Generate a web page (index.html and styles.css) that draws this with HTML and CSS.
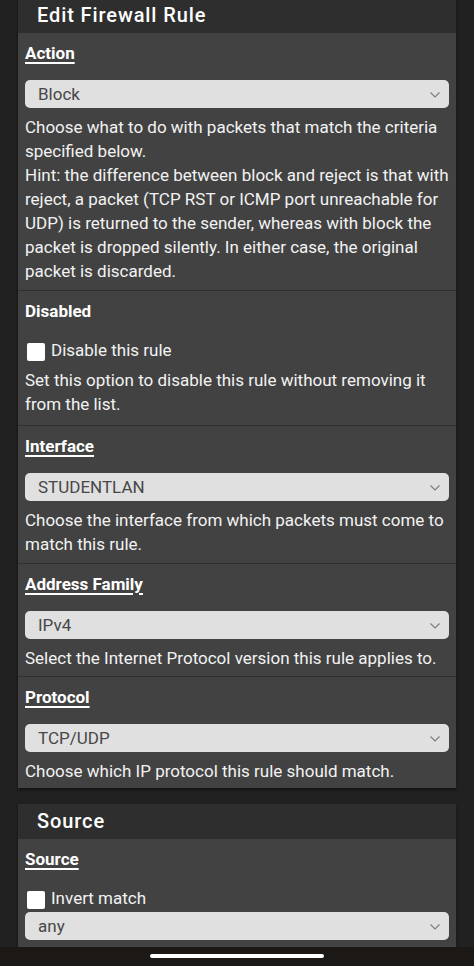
FILE: index.html
```html
<!DOCTYPE html>
<html lang="en">
<head>
<meta charset="utf-8">
<title>Edit Firewall Rule</title>
<link rel="stylesheet" href="styles.css">
</head>
<body>
<div class="page">
  <section class="panel panel-first">
    <h2 class="panel-heading">Edit Firewall Rule</h2>
    <div class="panel-body">
      <div class="row">
        <div class="label underlined">Action</div>
        <div class="select"><span>Block</span><svg class="chev" width="10" height="6" viewBox="0 0 10 6"><path d="M0.5 0.5 L5 5 L9.5 0.5" fill="none" stroke="#7a7a7a" stroke-width="1.1"/></svg></div>
        <p class="desc">Choose what to do with packets that match the criteria specified below.<br>Hint: the difference between block and reject is that with reject, a packet (TCP RST or ICMP port unreachable for UDP) is returned to the sender, whereas with block the packet is dropped silently. In either case, the original packet is discarded.</p>
      </div>
      <div class="row row-check">
        <div class="label">Disabled</div>
        <label class="check"><span class="box"></span><span class="check-text">Disable this rule</span></label>
        <p class="desc desc-after-check">Set this option to disable this rule without removing it from the list.</p>
      </div>
      <div class="row">
        <div class="label underlined">Interface</div>
        <div class="select"><span>STUDENTLAN</span><svg class="chev" width="10" height="6" viewBox="0 0 10 6"><path d="M0.5 0.5 L5 5 L9.5 0.5" fill="none" stroke="#7a7a7a" stroke-width="1.1"/></svg></div>
        <p class="desc">Choose the interface from which packets must come to match this rule.</p>
      </div>
      <div class="row row-tight">
        <div class="label underlined">Address Family</div>
        <div class="select"><span>IPv4</span><svg class="chev" width="10" height="6" viewBox="0 0 10 6"><path d="M0.5 0.5 L5 5 L9.5 0.5" fill="none" stroke="#7a7a7a" stroke-width="1.1"/></svg></div>
        <p class="desc">Select the Internet Protocol version this rule applies to.</p>
      </div>
      <div class="row row-last">
        <div class="label underlined">Protocol</div>
        <div class="select"><span>TCP/UDP</span><svg class="chev" width="10" height="6" viewBox="0 0 10 6"><path d="M0.5 0.5 L5 5 L9.5 0.5" fill="none" stroke="#7a7a7a" stroke-width="1.1"/></svg></div>
        <p class="desc">Choose which IP protocol this rule should match.</p>
      </div>
    </div>
  </section>

  <section class="panel">
    <h2 class="panel-heading">Source</h2>
    <div class="panel-body">
      <div class="row row-source">
        <div class="label underlined">Source</div>
        <label class="check"><span class="box"></span><span class="check-text">Invert match</span></label>
        <div class="select select-tight"><span>any</span><svg class="chev" width="10" height="6" viewBox="0 0 10 6"><path d="M0.5 0.5 L5 5 L9.5 0.5" fill="none" stroke="#7a7a7a" stroke-width="1.1"/></svg></div>
      </div>
    </div>
  </section>
</div>
<div class="navbar"><span class="pill"></span></div>
</body>
</html>
```

FILE: styles.css
```css
html, body {
  margin: 0;
  padding: 0;
}
body {
  background: #212121;
  font-family: Roboto, "Noto Sans", "Liberation Sans", sans-serif;
  color: #f0f0f0;
  overflow: hidden;
  height: 966px;
}
.page {
  width: 438px;
  margin-left: 18px;
  display: flex;
  flex-direction: column;
  gap: 16px;
}
.panel {
  background: #424242;
  box-shadow: 0 2px 3px rgba(0, 0, 0, 0.45);
}
.panel-first {
  margin-top: -2px;
}
.panel-heading {
  margin: 0;
  height: 35px;
  line-height: 35px;
  padding-left: 19px;
  background: #2e2e2e;
  color: #ffffff;
  font-size: 20px;
  font-weight: 500;
  letter-spacing: 0.9px;
}
.row {
  padding: 8px 7px 7px;
  border-bottom: 1px solid #2f2f2f;
}
.row-tight {
  padding-bottom: 6px;
}
.row-last {
  border-bottom: none;
  padding-bottom: 5px;
}
.row-check {
  padding-bottom: 9px;
}
.row-source {
  border-bottom: none;
  padding-bottom: 40px;
}
.label {
  display: block;
  font-size: 17px;
  font-weight: 700;
  line-height: 24px;
  height: 24px;
  color: #ffffff;
  margin-bottom: 15px;
}
.underlined {
  text-decoration: underline;
  text-decoration-thickness: 2px;
  text-underline-offset: 3px;
}
.select {
  height: 28px;
  background: #e0e0e0;
  border-radius: 5px;
  display: flex;
  align-items: center;
  justify-content: space-between;
  padding: 0 9px 0 13px;
  font-size: 17px;
  color: #474747;
}
.select-tight {
  margin-top: 2px;
}
.chev {
  display: block;
  margin-top: 1px;
}
.desc {
  margin: 7px 0 0;
  font-size: 17px;
  line-height: 24px;
  color: #f2f2f2;
}
.desc-after-check {
  margin-top: 6px;
}
.check {
  display: flex;
  align-items: flex-start;
  height: 24px;
  font-size: 17px;
  line-height: 24px;
  color: #f2f2f2;
}
.box {
  width: 18px;
  height: 18px;
  background: #ffffff;
  border-radius: 2px;
  margin: 5px 6px 0 2px;
  flex: none;
}
.check-text {
  line-height: 24px;
}
.navbar {
  position: fixed;
  left: 0;
  right: 0;
  bottom: 0;
  height: 19px;
  background: #1c1816;
  display: flex;
  justify-content: center;
  padding-top: 7px;
  box-sizing: border-box;
}
.pill {
  width: 174px;
  height: 4px;
  border-radius: 2px;
  background: #ffffff;
}
```
